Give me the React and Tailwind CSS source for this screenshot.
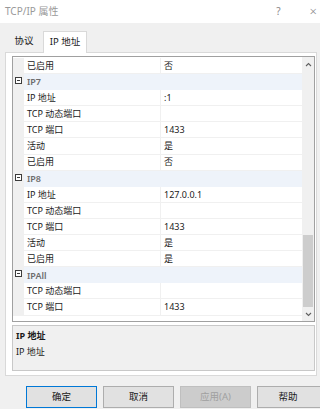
import React from 'react';

const rows = [
  { name: '已启用', value: '否' },
  { cat: 'IP7' },
  { name: 'IP 地址', value: ':1' },
  { name: 'TCP 动态端口', value: '' },
  { name: 'TCP 端口', value: '1433' },
  { name: '活动', value: '是' },
  { name: '已启用', value: '否' },
  { cat: 'IP8' },
  { name: 'IP 地址', value: '127.0.0.1' },
  { name: 'TCP 动态端口', value: '' },
  { name: 'TCP 端口', value: '1433' },
  { name: '活动', value: '是' },
  { name: '已启用', value: '是' },
  { cat: 'IPAll' },
  { name: 'TCP 动态端口', value: '' },
  { name: 'TCP 端口', value: '1433' },
];

function Collapse() {
  return (
    <div className="w-[7px] h-[7px] border border-[#3c3c3c] flex items-center justify-center bg-white">
      <div className="w-[3px] h-px bg-[#3c3c3c]" />
    </div>
  );
}

function Row({ row }) {
  if (row.cat) {
    return (
      <div className="flex h-[16.1px]">
        <div className="w-[11px] bg-[#f0f0f0] flex items-center justify-center -mt-[3px]">
          <Collapse />
        </div>
        <div className="flex-1 bg-[#eef3fa] flex items-center pl-[3px] text-[#6d6d6d] font-semibold">
          {row.cat}
        </div>
      </div>
    );
  }
  return (
    <div className="flex h-[16.1px]">
      <div className="w-[11px] bg-[#f0f0f0]" />
      <div className="w-[137px] flex items-center pl-[3px] border-b border-r border-[#f0f0f0]">
        {row.name}
      </div>
      <div className="flex-1 flex items-center pl-[3px] border-b border-[#f0f0f0]">{row.value}</div>
    </div>
  );
}

function Chevron({ up }) {
  return (
    <svg width="7" height="5" viewBox="0 0 7 5">
      <path d={up ? 'M1 4L3.5 1.5L6 4' : 'M1 1L3.5 3.5L6 1'} fill="none" stroke="#606060" strokeWidth="1.1" />
    </svg>
  );
}

export default function App() {
  return (
    <div className="w-[320px] h-[409px] overflow-hidden bg-[#f0f0f0] text-[#1a1a1a] font-['Noto_Sans','Noto_Sans_CJK_SC',sans-serif]">
      {/* title bar */}
      <div className="h-[23px] bg-white flex items-center justify-between pl-[5px] pr-[3px] text-[10px] text-[#999]">
        <span>TCP/IP 属性</span>
        <div className="flex items-center gap-[29px] text-[#888]">
          <span className="text-[10px]">?</span>
          <span className="text-[13px] font-light">×</span>
        </div>
      </div>

      {/* tabs */}
      <div className="flex items-end h-[29px] pl-[5px] text-[9.5px]">
        <div className="h-[21px] w-[38px] flex items-center justify-center">协议</div>
        <div className="relative z-10 h-[22px] w-[44px] -mb-px bg-white border border-b-0 border-[#d9d9d9] flex items-center justify-center">
          IP 地址
        </div>
      </div>

      {/* tab page */}
      <div className="ml-[5px] w-[312px] h-[324px] bg-white border border-[#d9d9d9] pl-[6px] pt-[3px]">
        <div className="w-[303px] h-[266px] border border-[#a0a0a0] flex text-[9px]">
          <div className="flex-1 pt-px overflow-hidden">
            {rows.map((r, i) => (
              <Row key={i} row={r} />
            ))}
          </div>
          <div className="w-[12px] bg-[#f0f0f0] flex flex-col">
            <div className="h-[15px] flex items-center justify-center">
              <Chevron up />
            </div>
            <div className="flex-1 flex flex-col justify-end">
              <div className="h-[72px] bg-[#cdcdcd] mx-px" />
            </div>
            <div className="h-[14px] flex items-center justify-center">
              <Chevron />
            </div>
          </div>
        </div>

        <div className="mt-[3px] w-[303px] h-[46px] bg-[#f0f0f0] border border-[#c8c8c8] pl-[3px] pt-[2px] text-[9px] leading-[16px]">
          <div className="font-bold">IP 地址</div>
          <div>IP 地址</div>
        </div>
      </div>

      {/* buttons */}
      <div className="flex gap-[6px] pl-[26px] mt-[10px] text-[9.5px]">
        <div className="w-[71px] h-[22px] shrink-0 bg-[#e1e1e1] border border-[#0078d7] flex items-center justify-center">确定</div>
        <div className="w-[71px] h-[22px] shrink-0 bg-[#e1e1e1] border border-[#adadad] flex items-center justify-center">取消</div>
        <div className="w-[71px] h-[22px] shrink-0 bg-[#cccccc] border border-[#bfbfbf] text-[#a0a0a0] flex items-center justify-center">应用(A)</div>
        <div className="w-[71px] h-[22px] shrink-0 bg-[#e1e1e1] border border-[#adadad] flex items-center justify-center pr-[9px]">帮助</div>
      </div>
    </div>
  );
}
